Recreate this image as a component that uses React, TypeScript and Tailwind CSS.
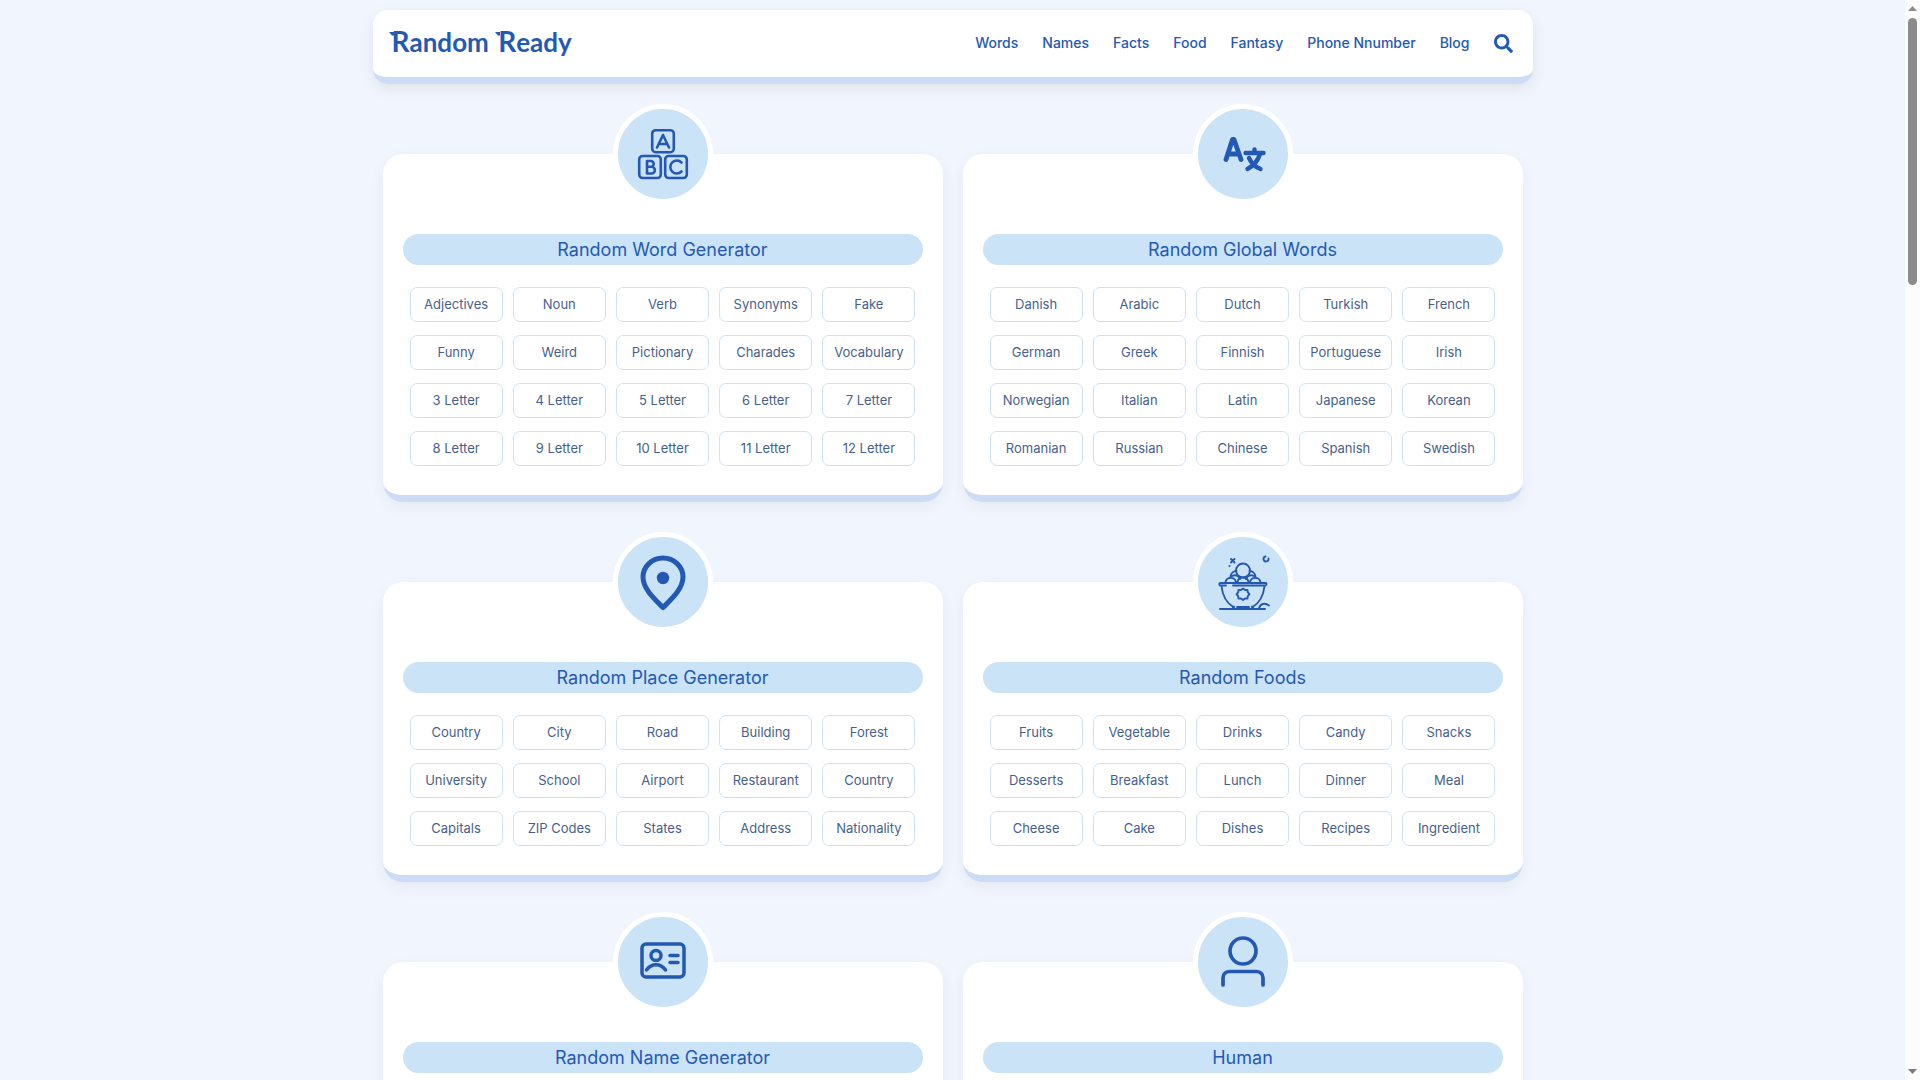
import type { ReactNode } from "react";
import { FaSearch } from "react-icons/fa";

const navLinks = ["Words", "Names", "Facts", "Food", "Fantasy", "Phone Nnumber", "Blog"];

function BlocksIcon() {
  return (
    <svg className="size-[52px]" viewBox="0 0 52 52" fill="none" stroke="currentColor" strokeWidth="2.6" strokeLinecap="round" strokeLinejoin="round">
      <rect x="15.2" y="2.2" width="21.600" height="22" rx="3.5" />
      <rect x="2.2" y="28" width="21.600" height="22" rx="3.5" />
      <rect x="28.2" y="28" width="21.600" height="22" rx="3.5" />
      <path d="M20 19.500 26 7l6 12.500M22 16h8" />
      <path d="M10 33v12.500h4.500a3.300 3.300 0 0 0 0-6.700H10h3.800a2.900 2.900 0 0 0 0-5.800z" />
      <path d="M44.500 34.500a6.500 6.500 0 1 0 0 9" />
    </svg>
  );
}

function TranslateIcon() {
  return (
    <svg className="size-[52px]" viewBox="0 0 52 52" fill="none" stroke="currentColor" strokeWidth="4.800" strokeLinecap="round" strokeLinejoin="round">
      <path d="M9 31.500 15.500 11.500h1.500L24 31.500M12 26h9.500" />
      <path d="M28.500 25H46.500M37.500 21.500V25M43 26c-2 6.500-6 11.500-12.500 15M32 30c2.500 5.500 6 9 11.500 11" strokeWidth="4.400" />
    </svg>
  );
}

function PinIcon() {
  return (
    <svg className="size-[60px]" viewBox="0 0 60 60" fill="none" stroke="currentColor" strokeWidth="5" strokeLinejoin="round">
      <path d="M30 55.500C22 47.500 10 37 10 25a20 19 0 0 1 40 0c0 12-12 22.500-20 30.500z" />
      <circle cx="30" cy="26" r="6.200" fill="currentColor" stroke="none" />
    </svg>
  );
}

function BowlIcon() {
  return (
    <svg className="size-[60px]" viewBox="0 0 60 60" fill="none" stroke="currentColor" strokeWidth="1.900" strokeLinecap="round" strokeLinejoin="round">
      <g transform="translate(0 3)">
        <path d="M7 30.500h6M20 30.500h32.500a1.500 1.500 0 0 0 .5-2.500H7a1.500 1.500 0 0 0 0 2.500" />
        <path d="M8.500 31c1 10 5.500 17.500 12.500 21.500M51.500 31c-1 10-5.500 17.500-12.500 21.500" />
        <circle cx="30" cy="15.500" r="7" />
        <path d="M12.500 27a5.400 5.400 0 0 1 10.500 0M24.500 27a5.600 5.600 0 0 1 11 0M37 27a5.400 5.400 0 0 1 10.500 0" />
        <path d="M17.500 21.500a6 6 0 0 1 6-5.500M19 21a5.500 5.500 0 0 1 8 3M42.500 21.500a6 6 0 0 0-6-5.500M41 21a5.500 5.500 0 0 0-8 3" />
        <path d="m30 33.500 2 1.500 2.500-.1.300 2.400 1.700 1.900-1.700 2-.3 2.400-2.500-.1-2 1.600-2-1.600-2.500.1-.3-2.400-1.700-2 1.700-1.900.3-2.400 2.500.1z" />
        <path d="M7 54h45M21 51.500l-1.500 2M39 51.500l1.500 2M24 52h12M46 53.500c1-5 6-6 10-3" />
        <path d="m18 4 3.500 3.500M21.500 4 18 7.500M16.500 11h.1M55.500 3.500a2.500 2.500 0 1 1-3-2" />
      </g>
    </svg>
  );
}

function IdCardIcon() {
  return (
    <svg className="size-[52px]" viewBox="0 0 52 52" fill="none" stroke="currentColor" strokeWidth="3.500" strokeLinecap="round" strokeLinejoin="round">
      <rect x="5" y="8" width="42" height="33" rx="4" />
      <circle cx="19" cy="19.500" r="5" />
      <path d="M9.500 34c5-7 14-7 19 0M33 19.500h8M33 26.500h8" />
    </svg>
  );
}

function PersonIcon() {
  return (
    <svg className="size-[60px]" viewBox="0 0 60 60" fill="none" stroke="currentColor" strokeWidth="3.700" strokeLinecap="round">
      <circle cx="30" cy="19" r="13" />
      <path d="M10 53v-7c0-4 3-6.500 7-6.500h26c4 0 7 2.500 7 6.500v7" />
    </svg>
  );
}

// Small flag on the upper left corner of the capitals in the logo
function LogoFlag() {
  return (
    <svg className="-mr-[2px] inline-block h-[20px] w-[5px] align-baseline" viewBox="0 0 5 20" fill="currentColor">
      <path d="M0 0h5v3.500H3z" />
    </svg>
  );
}

type Category = { title: string; icon: ReactNode; items: string[] };

const categories: Category[] = [
  {
    title: "Random Word Generator",
    icon: <BlocksIcon />,
    items: [
      "Adjectives", "Noun", "Verb", "Synonyms", "Fake",
      "Funny", "Weird", "Pictionary", "Charades", "Vocabulary",
      "3 Letter", "4 Letter", "5 Letter", "6 Letter", "7 Letter",
      "8 Letter", "9 Letter", "10 Letter", "11 Letter", "12 Letter",
    ],
  },
  {
    title: "Random Global Words",
    icon: <TranslateIcon />,
    items: [
      "Danish", "Arabic", "Dutch", "Turkish", "French",
      "German", "Greek", "Finnish", "Portuguese", "Irish",
      "Norwegian", "Italian", "Latin", "Japanese", "Korean",
      "Romanian", "Russian", "Chinese", "Spanish", "Swedish",
    ],
  },
  {
    title: "Random Place Generator",
    icon: <PinIcon />,
    items: [
      "Country", "City", "Road", "Building", "Forest",
      "University", "School", "Airport", "Restaurant", "Country",
      "Capitals", "ZIP Codes", "States", "Address", "Nationality",
    ],
  },
  {
    title: "Random Foods",
    icon: <BowlIcon />,
    items: [
      "Fruits", "Vegetable", "Drinks", "Candy", "Snacks",
      "Desserts", "Breakfast", "Lunch", "Dinner", "Meal",
      "Cheese", "Cake", "Dishes", "Recipes", "Ingredient",
    ],
  },
  { title: "Random Name Generator", icon: <IdCardIcon />, items: [] },
  { title: "Human", icon: <PersonIcon />, items: [] },
];

function CategoryCard({ title, icon, items }: Category) {
  return (
    <section className="rounded-[20px] border-b-[7px] border-[#cddcf6] bg-white px-5 pb-[29px] shadow-[0_5px_15px_rgba(0,0,0,0.05)]">
      <div className="mx-auto -mt-[50px] flex size-[100px] items-center justify-center rounded-full border-5 border-white bg-[#cbe3f7] text-[#2459b3]">
        {icon}
      </div>
      <h2 className="mt-[30px] rounded-full bg-[#cbe3f7] text-center text-[18px] leading-[31px] text-[#2459b3]">
        {title}
      </h2>
      <div className="mt-[22px] grid grid-cols-5 gap-x-[10px] gap-y-[13px] px-[7px]">
        {items.map((item, i) => (
          <a
            key={i}
            href="#"
            className="h-[35px] rounded-[7px] border border-[#cbe3f7] text-center text-[13px] leading-[32px] whitespace-nowrap text-[#455f90]"
          >
            {item}
          </a>
        ))}
      </div>
    </section>
  );
}

export default function App() {
  return (
    <div className="flex h-screen overflow-hidden bg-[#f1f5fd] font-['Inter','Liberation_Sans',sans-serif]">
      <div className="min-w-0 flex-1">
        <div className="mx-auto max-w-[1160px] pt-[10px]">
          <header className="flex h-[74px] items-center justify-between rounded-[15px] border-b-[7px] border-[#cddcf6] bg-white pr-5 pl-4 text-[#2459b3] shadow-[0_5px_15px_rgba(0,0,0,0.08)]">
            <a href="#" className="pb-1 font-['Lato',sans-serif] text-[26px] leading-[30px] font-bold whitespace-nowrap">
              <LogoFlag />
              <span className="text-[28px]">R</span>andom <LogoFlag />
              <span className="text-[28px]">R</span>eady
            </a>
            <nav className="flex items-center gap-6 text-[14px] font-medium">
              {navLinks.map((link) => (
                <a key={link} href="#" className="pb-[2px]">
                  {link}
                </a>
              ))}
              <button type="button" aria-label="Search">
                <FaSearch className="size-[19px]" />
              </button>
            </nav>
          </header>
          <main className="grid grid-cols-2 gap-x-5 gap-y-20 px-[10px] pt-[70px]">
            {categories.map((category) => (
              <CategoryCard key={category.title} {...category} />
            ))}
          </main>
        </div>
      </div>
      <div className="flex w-[15px] flex-col items-center bg-[#fcfcfc] py-[6px]" aria-hidden="true">
        <svg className="h-[5px] w-[9px]" viewBox="0 0 9 5" fill="#8b8b8b">
          <path d="M0 5 4.500 0 9 5z" />
        </svg>
        <div className="mt-[7px] h-[267px] w-[9px] rounded-full bg-[#8b8b8b]" />
        <svg className="mt-auto h-[5px] w-[9px]" viewBox="0 0 9 5" fill="#7b7b7b">
          <path d="M0 0 4.500 5 9 0z" />
        </svg>
      </div>
    </div>
  );
}
